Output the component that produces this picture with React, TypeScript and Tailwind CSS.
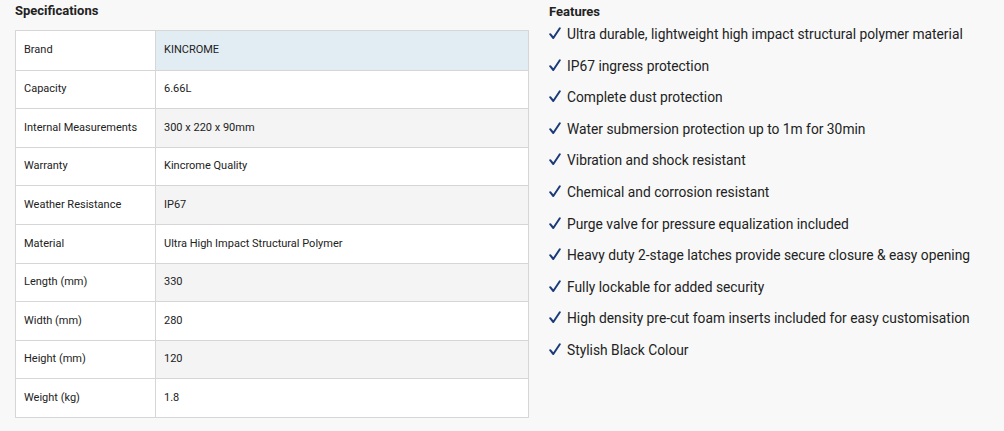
const specs: [string, string][] = [
  ['Brand', 'KINCROME'],
  ['Capacity', '6.66L'],
  ['Internal Measurements', '300 x 220 x 90mm'],
  ['Warranty', 'Kincrome Quality'],
  ['Weather Resistance', 'IP67'],
  ['Material', 'Ultra High Impact Structural Polymer'],
  ['Length (mm)', '330'],
  ['Width (mm)', '280'],
  ['Height (mm)', '120'],
  ['Weight (kg)', '1.8'],
];

const features = [
  'Ultra durable, lightweight high impact structural polymer material',
  'IP67 ingress protection',
  'Complete dust protection',
  'Water submersion protection up to 1m for 30min',
  'Vibration and shock resistant',
  'Chemical and corrosion resistant',
  'Purge valve for pressure equalization included',
  'Heavy duty 2-stage latches provide secure closure & easy opening',
  'Fully lockable for added security',
  'High density pre-cut foam inserts included for easy customisation',
  'Stylish Black Colour',
];

// tick glyph: short left stroke, long right stroke
function Tick() {
  return (
    <svg width="12" height="13" viewBox="0 0 12 13" className="mt-[3px] shrink-0" fill="none">
      <path d="M1.2 7.2 L4.3 11 L10.8 1.3" stroke="#1b3a78" strokeWidth="2" strokeLinecap="round" strokeLinejoin="round" />
    </svg>
  );
}

export default function App() {
  return (
    <div className="flex h-[431px] w-[1004px] bg-[#f8f8f8] font-['Roboto',sans-serif] text-[#222]">
      <div className="ml-[15px] w-[514px]">
        <h2 className="mt-[3px] h-[27px] text-[13px] font-bold leading-[16px]">Specifications</h2>
        <div className="border border-[#d6d6d6] bg-white">
          {specs.map(([label, value], i) => (
            <div key={label} className={`flex h-[38.6px] ${i > 0 ? 'border-t border-[#d6d6d6]' : ''}`}>
              <div className="flex w-[140px] shrink-0 items-center border-r border-[#d6d6d6] pl-[8px] text-[11px]">{label}</div>
              <div
                className={`flex flex-1 items-center pl-[8px] text-[11px] ${
                  i === 0 ? 'bg-[#e2edf3]' : i % 2 === 0 ? 'bg-[#f4f4f4]' : 'bg-white'
                }`}
              >
                {value}
              </div>
            </div>
          ))}
        </div>
      </div>
      <div className="ml-[20px]">
        <h2 className="mt-[4px] text-[13px] font-bold leading-[16px]">Features</h2>
        <ul className="mt-[4px]">
          {features.map((f) => (
            <li key={f} className="flex h-[31.6px] items-start gap-[6px] text-[13.8px] leading-[20px]">
              <Tick />
              <span>{f}</span>
            </li>
          ))}
        </ul>
      </div>
    </div>
  );
}
